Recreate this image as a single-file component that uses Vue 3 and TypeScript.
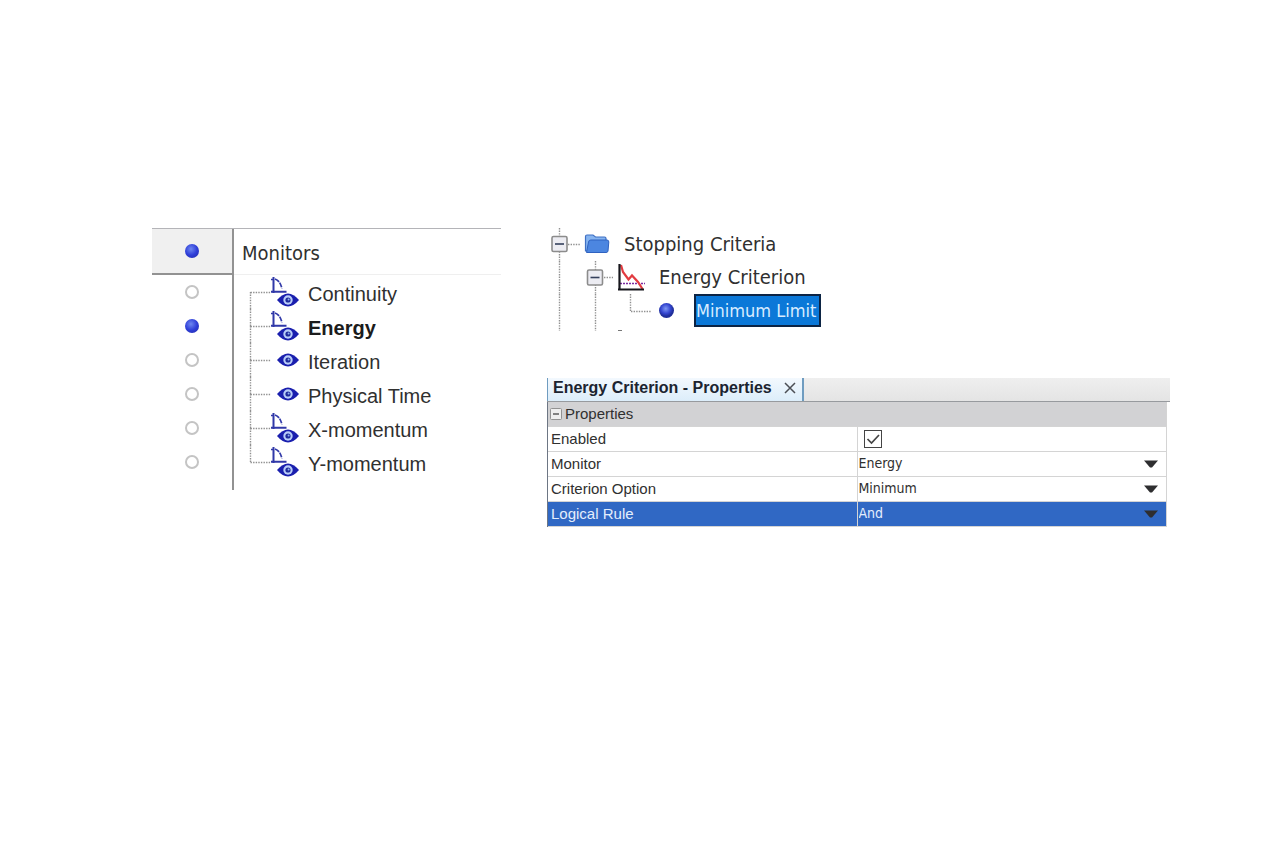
<script setup lang="ts">
import { ref } from 'vue'

interface Monitor {
  name: string
  plotted: boolean
}

const monitors: Monitor[] = [
  { name: 'Continuity', plotted: true },
  { name: 'Energy', plotted: true },
  { name: 'Iteration', plotted: false },
  { name: 'Physical Time', plotted: false },
  { name: 'X-momentum', plotted: true },
  { name: 'Y-momentum', plotted: true },
]

const active = ref('Energy')
const enabled = ref(true)

const choices = [
  { id: 'monitor', label: 'Monitor', value: 'Energy' },
  { id: 'option', label: 'Criterion Option', value: 'Minimum' },
  { id: 'rule', label: 'Logical Rule', value: 'And' },
]
const selectedRow = ref('rule')
</script>

<template>
  <main class="page">
    <section class="monitors">
      <header class="monitors-head">
        <div class="gutter-head"><span class="ball"></span></div>
        <h2 class="monitors-title">Monitors</h2>
      </header>
      <ul class="monitor-list">
        <li v-for="(m, i) in monitors" :key="m.name" class="monitor-row">
          <div class="gutter">
            <input :id="'m' + i" v-model="active" type="radio" name="monitor" class="radio" :value="m.name" />
          </div>
          <svg class="monitor-icon" width="54" height="34" viewBox="0 0 54 34" aria-hidden="true">
            <g class="dots">
              <path v-if="i > 0" d="M4.5 0V17" />
              <path v-if="i < monitors.length - 1" d="M4.5 17V34" />
              <path d="M4.5 17.5H25" />
            </g>
            <g v-if="m.plotted" fill="none" stroke="#3038a8">
              <path d="M27.5 2V18M25 16.8H40.500" stroke-width="2" />
              <path d="M25 4.500H28" stroke-width="1.500" />
              <path d="M29 4Q34 5.500 36 13.500" stroke-width="1.700" stroke-dasharray="5 1" />
            </g>
            <g :transform="m.plotted ? 'translate(42 25)' : 'translate(42 17)'">
              <path d="M-11 0Q-5.500 -6.500 0 -6.500T11 0Q5.500 6.500 0 6.500T-11 0Z" fill="#1a1fae" />
              <circle r="4.700" fill="#b9cdf8" />
              <circle r="2.600" fill="#1f2a9c" />
              <circle cx="0.600" cy="-0.500" r="1" fill="#8fb0ee" />
            </g>
          </svg>
          <label :for="'m' + i" class="monitor-name" :class="{ strong: active === m.name }">{{ m.name }}</label>
        </li>
      </ul>
    </section>

    <div class="side">
      <section class="tree">
        <div class="tree-row">
          <svg width="77" height="33" viewBox="0 0 77 33" aria-hidden="true">
            <path class="dots" d="M12.500 0V33M21 16.500H33" />
            <rect x="5" y="8.500" width="15" height="15" rx="1.500" fill="#ececf2" stroke="#8c8c8c" stroke-width="1.600" />
            <path d="M8 16H17" stroke="#34405c" stroke-width="1.600" />
            <path d="M38.500 23V8.500Q38.500 7 40 7H46L48.500 9H57.500Q59 9 59 10.500V23Z" fill="#86b4f0" stroke="#3f70c4" stroke-width="1.200" />
            <path d="M39.500 24.500L41.500 14Q41.800 12 43.800 12H60Q61.800 12 61.800 14L61 23Q60.800 24.500 59 24.500Z" fill="#4c86e0" stroke="#2f62c0" stroke-width="1" />
          </svg>
          <span class="tree-name">Stopping Criteria</span>
        </div>
        <div class="tree-row">
          <svg width="112" height="33" viewBox="0 0 112 33" aria-hidden="true">
            <path class="dots" d="M12.500 0V33M48.500 0V33M57 16.500H66" />
            <rect x="40.500" y="9" width="15" height="15" rx="1.500" fill="#ececf2" stroke="#8c8c8c" stroke-width="1.600" />
            <path d="M43.500 16.500H52.500" stroke="#34405c" stroke-width="1.600" />
            <path d="M73 22.500H98" stroke="#7c2aa0" stroke-width="1.600" stroke-dasharray="2 1" />
            <path d="M74 4L76 11L81.500 18.500L85 14.500L91 21L95.500 28" fill="none" stroke="#e23b40" stroke-width="2.200" />
            <path d="M72.500 3V29M71 28.500H97" stroke="#16161c" stroke-width="2.200" />
          </svg>
          <span class="tree-name">Energy Criterion</span>
        </div>
        <div class="tree-row last">
          <svg width="147" height="37" viewBox="0 0 147 37" aria-hidden="true">
            <defs>
              <radialGradient id="leaf-ball" cx="45%" cy="38%">
                <stop offset="0" stop-color="#7f98f4" />
                <stop offset="0.650" stop-color="#3546d0" />
                <stop offset="1" stop-color="#202f9a" />
              </radialGradient>
            </defs>
            <path class="dots" d="M12.500 0V37M48.500 0V37M83.500 0V17M84 17.500H104" />
            <path d="M71 36.500H75" stroke="#777" />
            <circle cx="119.500" cy="16.500" r="7.500" fill="url(#leaf-ball)" />
          </svg>
          <button type="button" class="tree-selected">Minimum Limit</button>
        </div>
      </section>

      <section class="properties">
        <div class="tabs">
          <div class="tab">
            <h2 class="tab-title">Energy Criterion - Properties</h2>
            <button type="button" class="close" aria-label="Close">
              <svg width="12" height="12" viewBox="0 0 12 12"><path d="M1 1L11 11M11 1L1 11" stroke="#4c4f55" stroke-width="1.500" /></svg>
            </button>
          </div>
        </div>
        <table class="grid">
          <thead>
            <tr>
              <th colspan="2" class="group">
                <span class="group-inner">
                  <svg width="12" height="12" viewBox="0 0 12 12" aria-hidden="true">
                    <rect x="0.500" y="0.500" width="11" height="11" rx="1" fill="#eee" stroke="#929292" />
                    <path d="M3 6H9" stroke="#444" stroke-width="1.300" />
                  </svg>
                  Properties
                </span>
              </th>
            </tr>
          </thead>
          <tbody>
            <tr>
              <th scope="row"><label for="enabled">Enabled</label></th>
              <td>
                <span class="cell">
                  <input id="enabled" v-model="enabled" type="checkbox" class="check" />
                  <svg v-if="enabled" class="tick" width="18" height="18" viewBox="0 0 18 18" aria-hidden="true">
                    <path d="M3.500 9L7.500 13L15 5" fill="none" stroke="#444" stroke-width="1.700" />
                  </svg>
                </span>
              </td>
            </tr>
            <tr v-for="c in choices" :key="c.id" :class="{ picked: selectedRow === c.id }" @click="selectedRow = c.id">
              <th scope="row"><label :for="c.id">{{ c.label }}</label></th>
              <td>
                <span class="cell">
                  <select :id="c.id" class="select"><option>{{ c.value }}</option></select>
                  <svg class="arrow" width="16" height="8" viewBox="0 0 16 8" aria-hidden="true"><path d="M1 0.500H15L9 7.500H7Z" fill="#2e2e30" /></svg>
                </span>
              </td>
            </tr>
          </tbody>
        </table>
      </section>
    </div>
  </main>
</template>

<style>
body {
  margin: 0;
  background: #fff;
}
</style>

<style scoped>
.page {
  display: grid;
  grid-template-columns: 349fr 623fr;
  gap: 46px;
  align-items: start;
  padding: 228px 110px 0 152px;
  font-family: "Liberation Sans", Arial, sans-serif;
  color: #303030;
}
.monitors-head {
  display: flex;
  height: 46px;
  border-top: 1px solid #b4b4b8;
}
.gutter-head,
.gutter {
  box-sizing: border-box;
  width: 82px;
  flex: none;
  display: flex;
  align-items: center;
  justify-content: center;
  border-right: 2px solid #929292;
}
.gutter-head {
  background: #f0f0f0;
  border-bottom: 2px solid #929292;
}
.ball,
.radio:checked {
  width: 14px;
  height: 14px;
  border: 0;
  border-radius: 50%;
  background: radial-gradient(circle at 42% 36%, #6d86f0, #2f3fd8 50%, #2129a8 100%);
}
.monitors-title {
  flex: 1;
  margin: 0;
  padding: 0 0 0 8px;
  border-bottom: 1px solid #efefef;
  font: 400 20px/48px "DejaVu Sans Condensed", "Noto Sans", sans-serif;
}
.monitor-list {
  list-style: none;
  margin: 0;
  padding: 0;
  display: flex;
  flex-direction: column;
}
.monitor-row {
  display: flex;
  height: 34px;
}
.monitor-row:last-child {
  height: 45px;
}
.monitor-row:last-child .gutter {
  padding-bottom: 11px;
}
.radio {
  appearance: none;
  box-sizing: border-box;
  width: 14px;
  height: 14px;
  margin: 0;
  border: 2px solid #c4c4c4;
  border-radius: 50%;
}
.monitor-icon {
  flex: none;
  margin-left: 12px;
}
.monitor-name {
  margin-left: 8px;
  font-size: 20px;
  line-height: 38px;
}
.strong {
  font-weight: 700;
  color: #1c1c1c;
}
.dots {
  fill: none;
  stroke: #909090;
  stroke-width: 1.4;
  stroke-dasharray: 1.4 1.2;
}
.side {
  display: flex;
  flex-direction: column;
  gap: 47px;
}
.tree-row {
  display: flex;
  height: 33px;
}
.tree-row.last {
  height: 37px;
}
.tree-row svg {
  flex: none;
}
.tree-name,
.tree-selected {
  font: 400 20px/33px "DejaVu Sans Condensed", "Noto Sans", sans-serif;
}
.tree-selected {
  height: 33px;
  padding: 0 3px 0 0;
  border: 2px solid #0c2444;
  background: #0b78d8;
  color: #d8ecff;
  font-size: 18px;
  line-height: 29px;
}
.tabs {
  display: flex;
  height: 23px;
  background: linear-gradient(#efefef, #e4e4e4);
  border-bottom: 1px solid #979a9e;
}
.tab {
  display: flex;
  align-items: center;
  gap: 12px;
  padding: 0 6px 3px 5px;
  border-left: 1px solid #6f9cc0;
  border-right: 2px solid #6f9cc0;
  background: linear-gradient(#f3f9fe, #dcedfa);
}
.tab-title {
  margin: 0;
  font-size: 16px;
  line-height: 20px;
  color: #1c2430;
}
.close {
  display: flex;
  padding: 0;
  border: 0;
  background: none;
}
.grid {
  width: calc(100% - 3px);
  table-layout: fixed;
  border-collapse: separate;
  border-spacing: 0;
  border-left: 1px solid #6d7684;
}
.grid th,
.grid td {
  box-sizing: border-box;
  height: 25px;
  padding: 0;
  border-right: 1px solid #d4d4d4;
  border-bottom: 1px solid #d4d4d4;
  font-size: 15px;
  font-weight: 400;
  line-height: 24px;
  text-align: left;
}
.grid tbody th {
  padding-left: 3px;
}
.grid .group {
  padding-left: 2px;
  background: #d2d2d4;
}
.group-inner {
  display: flex;
  align-items: center;
  gap: 3px;
}
.cell {
  display: flex;
  align-items: center;
  position: relative;
  height: 24px;
}
.check {
  appearance: none;
  box-sizing: border-box;
  width: 18px;
  height: 18px;
  margin: 0 0 0 6px;
  border: 1px solid #444;
  background: #fff;
}
.tick {
  position: absolute;
  left: 6px;
  pointer-events: none;
}
.select {
  appearance: none;
  width: 100%;
  height: 24px;
  margin: 0;
  padding: 0 0 2px 1px;
  border: 0;
  background: transparent;
  color: inherit;
  font: 400 14px/20px "DejaVu Sans Condensed", "Noto Sans", sans-serif;
}
.arrow {
  position: absolute;
  right: 7px;
  pointer-events: none;
}
.picked {
  background: #3068c4;
  color: #e4eefc;
}
</style>
